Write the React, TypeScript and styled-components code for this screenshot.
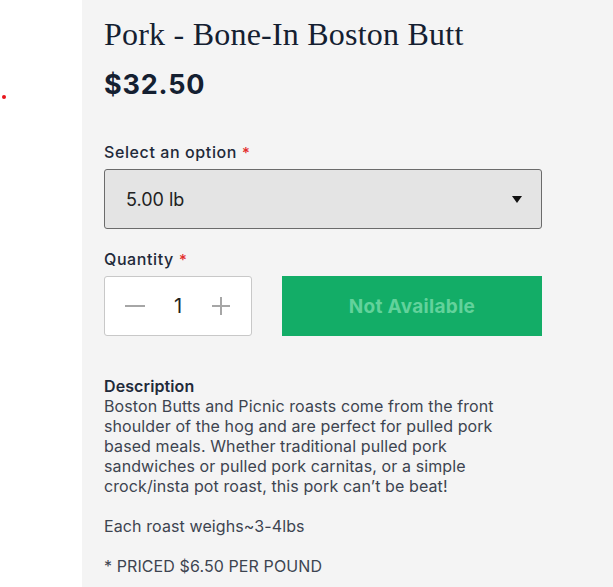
import styled, { createGlobalStyle } from 'styled-components';

const GlobalStyle = createGlobalStyle`
  html, body {
    margin: 0;
    padding: 0;
    background: #ffffff;
  }
  * {
    box-sizing: border-box;
  }
`;

const Page = styled.div`
  display: flex;
  width: 613px;
  height: 587px;
  overflow: hidden;
`;

const Gutter = styled.div`
  width: 82px;
  flex-shrink: 0;
  padding: 95px 0 0 2px;
`;

const Dot = styled.span`
  display: block;
  width: 4px;
  height: 4px;
  border-radius: 50%;
  background: #e8141b;
`;

const Panel = styled.main`
  flex: 1;
  background: #f4f4f4;
  padding: 16px 71px 0 22px;
  display: flex;
  flex-direction: column;
  color: #1a2433;
`;

const Title = styled.h1`
  margin: 0;
  font-family: 'Liberation Serif', 'Times New Roman', serif;
  font-weight: 400;
  font-size: 32px;
  line-height: 36px;
  letter-spacing: 0.22px;
  color: #142031;
`;

const Price = styled.div`
  margin-top: 16px;
  font-family: 'Inter', 'Liberation Sans', sans-serif;
  font-weight: 700;
  font-size: 27px;
  line-height: 34px;
  letter-spacing: 0.8px;
  color: #142031;
`;

const Field = styled.div<{ $top: number }>`
  margin-top: ${p => p.$top}px;
  display: flex;
  flex-direction: column;
`;

const Label = styled.label`
  font-family: 'Inter', 'Liberation Sans', sans-serif;
  font-weight: 500;
  font-size: 16px;
  line-height: 20px;
  letter-spacing: 0.6px;
  color: #1f2a3a;
  margin-bottom: 6px;
`;

const Required = styled.span`
  color: #e32b2b;
  margin-left: 5px;
  font-size: 15px;
`;

const SelectBox = styled.div`
  height: 60px;
  border: 1px solid #6b6b6b;
  border-radius: 3px;
  background: #e4e4e4;
  display: flex;
  align-items: center;
  justify-content: space-between;
  padding: 0 19px 0 21px;
  font-family: 'Inter', 'Liberation Sans', sans-serif;
  font-size: 18px;
  color: #222;
`;

const Caret = styled.span`
  width: 0;
  height: 0;
  border-left: 5px solid transparent;
  border-right: 5px solid transparent;
  border-top: 7px solid #111;
`;

const QtyRow = styled.div`
  display: flex;
  gap: 30px;
`;

const Stepper = styled.div`
  width: 148px;
  height: 60px;
  background: #ffffff;
  border: 1px solid #c8c8c8;
  border-radius: 3px;
  display: flex;
  align-items: center;
  justify-content: space-between;
  padding: 0 20px;
  font-family: 'Inter', 'Liberation Sans', sans-serif;
  font-size: 20px;
  color: #222;
`;

const StepIcon = styled.svg`
  width: 20px;
  height: 20px;
  stroke: #a6a6a6;
  stroke-width: 2;
`;

const Button = styled.button`
  flex: 1;
  height: 60px;
  border: none;
  border-radius: 0;
  background: #13ad67;
  color: #62d29b;
  font-family: 'Inter', 'Liberation Sans', sans-serif;
  font-weight: 700;
  font-size: 19px;
  letter-spacing: 0.3px;
`;

const Description = styled.section`
  margin-top: 40px;
  max-width: 420px;
  font-family: 'Inter', 'Liberation Sans', sans-serif;
  font-size: 16px;
  line-height: 20px;
  letter-spacing: 0.1px;
  color: #3d4450;
`;

const DescHeading = styled.h2`
  margin: 0;
  font-size: 16px;
  line-height: 20px;
  font-weight: 600;
  color: #1f2a3a;
`;

const Paragraph = styled.p`
  margin: 0 0 20px;
`;

export default function App() {
  return (
    <>
      <GlobalStyle />
      <Page>
        <Gutter>
          <Dot />
        </Gutter>
        <Panel>
          <Title>Pork - Bone-In Boston Butt</Title>
          <Price>$32.50</Price>
          <Field $top={40}>
            <Label>
              Select an option<Required>*</Required>
            </Label>
            <SelectBox>
              <span>5.00 lb</span>
              <Caret />
            </SelectBox>
          </Field>
          <Field $top={20}>
            <Label>
              Quantity<Required>*</Required>
            </Label>
            <QtyRow>
              <Stepper>
                <StepIcon viewBox="0 0 20 20">
                  <line x1="0" y1="10" x2="20" y2="10" />
                </StepIcon>
                <span>1</span>
                <StepIcon viewBox="0 0 20 20">
                  <line x1="1" y1="10" x2="19" y2="10" />
                  <line x1="10" y1="1" x2="10" y2="19" />
                </StepIcon>
              </Stepper>
              <Button disabled>Not Available</Button>
            </QtyRow>
          </Field>
          <Description>
            <DescHeading>Description</DescHeading>
            <Paragraph>
              Boston Butts and Picnic roasts come from the front shoulder of the hog and are perfect for
              pulled pork based meals. Whether traditional pulled pork sandwiches or pulled pork
              carnitas, or a simple crock/insta pot roast, this pork can’t be beat!
            </Paragraph>
            <Paragraph>Each roast weighs~3-4lbs</Paragraph>
            <Paragraph>* PRICED $6.50 PER POUND</Paragraph>
          </Description>
        </Panel>
      </Page>
    </>
  );
}
